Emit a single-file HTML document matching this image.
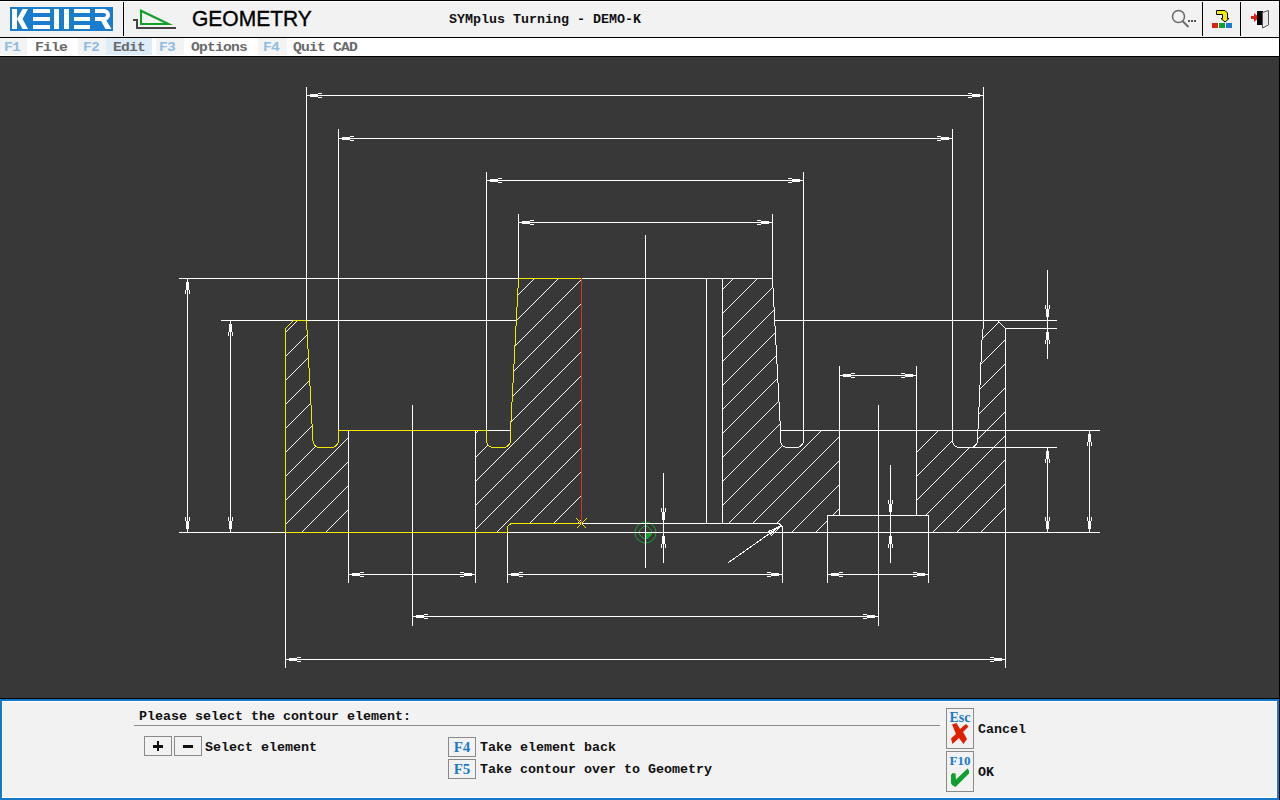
<!DOCTYPE html>
<html><head><meta charset="utf-8">
<style>
*{margin:0;padding:0;box-sizing:border-box}
html,body{width:1280px;height:800px;overflow:hidden;background:#383838;position:relative;font-family:"Liberation Sans",sans-serif}
.abs{position:absolute}
.mono{font-family:"Liberation Mono",monospace}
#hdr{position:absolute;left:0;top:0;width:1280px;height:37px;background:#f2f2f2;border-top:1px solid #000}
#hdr:before{content:"";position:absolute;left:0;top:0;width:1280px;height:1px;background:#fff}
.blk{position:absolute;background:#000}
#menu{position:absolute;left:0;top:38px;width:1280px;height:18px;background:#fff}
.key{position:absolute;top:0;height:17px;background:#f3f3f3}
.mt{position:absolute;top:2px;font-family:"Liberation Mono",monospace;font-weight:bold;font-size:13.33px;line-height:16px;color:#6a6a6a;white-space:pre;transform:scaleX(1.1);transform-origin:0 0;letter-spacing:-0.73px}
.mk{color:#8dbde6}
#panel{position:absolute;left:0;top:699px;width:1279px;height:101px;background:#f2f2f2;border:2px solid #1678c8}
#panel:before{content:"";position:absolute;left:0;top:0;right:0;bottom:0;border-left:1px solid #fff;border-top:1px solid #fff;border-right:1px solid #fff;border-bottom:1px solid #fff}
.pt{position:absolute;font-family:"Liberation Mono",monospace;font-weight:bold;font-size:13.33px;line-height:16px;color:#111;white-space:pre}
.box{position:absolute;border:1px solid #8a8a8a;background:#f2f2f2}
.kb{font-family:"Liberation Serif",serif;font-weight:bold;color:#1a7ac8}
</style></head><body>
<svg width="1280" height="800" style="position:absolute;left:0;top:0" shape-rendering="crispEdges">
<circle cx="645.5" cy="532.5" r="10.5" fill="none" stroke="#18a030" shape-rendering="auto"/>
<path d="M643.5,526.5 L647.5,526.5 L651.5,530.5 L651.5,534.5 L647.5,538.5 L643.5,538.5 L639.5,534.5 L639.5,530.5 Z" fill="none" stroke="#18a030"/>
<path d="M646,533 L652,533 L652,534 L647,539 L646,539 Z" fill="#18a030"/>
<g shape-rendering="crispEdges"><rect x="306" y="95" width="678" height="1" fill="#ffffff"/>
<rect x="310" y="94" width="8" height="3" fill="#ffffff"/>
<rect x="318" y="93" width="4" height="1" fill="#ffffff"/>
<rect x="318" y="97" width="4" height="1" fill="#ffffff"/>
<rect x="972" y="94" width="8" height="3" fill="#ffffff"/>
<rect x="968" y="93" width="4" height="1" fill="#ffffff"/>
<rect x="968" y="97" width="4" height="1" fill="#ffffff"/>
<rect x="338" y="138" width="615" height="1" fill="#ffffff"/>
<rect x="342" y="137" width="8" height="3" fill="#ffffff"/>
<rect x="350" y="136" width="4" height="1" fill="#ffffff"/>
<rect x="350" y="140" width="4" height="1" fill="#ffffff"/>
<rect x="941" y="137" width="8" height="3" fill="#ffffff"/>
<rect x="937" y="136" width="4" height="1" fill="#ffffff"/>
<rect x="937" y="140" width="4" height="1" fill="#ffffff"/>
<rect x="486" y="180" width="318" height="1" fill="#ffffff"/>
<rect x="490" y="179" width="8" height="3" fill="#ffffff"/>
<rect x="498" y="178" width="4" height="1" fill="#ffffff"/>
<rect x="498" y="182" width="4" height="1" fill="#ffffff"/>
<rect x="792" y="179" width="8" height="3" fill="#ffffff"/>
<rect x="788" y="178" width="4" height="1" fill="#ffffff"/>
<rect x="788" y="182" width="4" height="1" fill="#ffffff"/>
<rect x="518" y="222" width="255" height="1" fill="#ffffff"/>
<rect x="522" y="221" width="8" height="3" fill="#ffffff"/>
<rect x="530" y="220" width="4" height="1" fill="#ffffff"/>
<rect x="530" y="224" width="4" height="1" fill="#ffffff"/>
<rect x="761" y="221" width="8" height="3" fill="#ffffff"/>
<rect x="757" y="220" width="4" height="1" fill="#ffffff"/>
<rect x="757" y="224" width="4" height="1" fill="#ffffff"/>
<rect x="839" y="375" width="78" height="1" fill="#ffffff"/>
<rect x="843" y="374" width="8" height="3" fill="#ffffff"/>
<rect x="851" y="373" width="4" height="1" fill="#ffffff"/>
<rect x="851" y="377" width="4" height="1" fill="#ffffff"/>
<rect x="905" y="374" width="8" height="3" fill="#ffffff"/>
<rect x="901" y="373" width="4" height="1" fill="#ffffff"/>
<rect x="901" y="377" width="4" height="1" fill="#ffffff"/>
<rect x="348" y="574" width="128" height="1" fill="#ffffff"/>
<rect x="352" y="573" width="8" height="3" fill="#ffffff"/>
<rect x="360" y="572" width="4" height="1" fill="#ffffff"/>
<rect x="360" y="576" width="4" height="1" fill="#ffffff"/>
<rect x="464" y="573" width="8" height="3" fill="#ffffff"/>
<rect x="460" y="572" width="4" height="1" fill="#ffffff"/>
<rect x="460" y="576" width="4" height="1" fill="#ffffff"/>
<rect x="507" y="574" width="276" height="1" fill="#ffffff"/>
<rect x="511" y="573" width="8" height="3" fill="#ffffff"/>
<rect x="519" y="572" width="4" height="1" fill="#ffffff"/>
<rect x="519" y="576" width="4" height="1" fill="#ffffff"/>
<rect x="771" y="573" width="8" height="3" fill="#ffffff"/>
<rect x="767" y="572" width="4" height="1" fill="#ffffff"/>
<rect x="767" y="576" width="4" height="1" fill="#ffffff"/>
<rect x="827" y="574" width="102" height="1" fill="#ffffff"/>
<rect x="831" y="573" width="8" height="3" fill="#ffffff"/>
<rect x="839" y="572" width="4" height="1" fill="#ffffff"/>
<rect x="839" y="576" width="4" height="1" fill="#ffffff"/>
<rect x="917" y="573" width="8" height="3" fill="#ffffff"/>
<rect x="913" y="572" width="4" height="1" fill="#ffffff"/>
<rect x="913" y="576" width="4" height="1" fill="#ffffff"/>
<rect x="412" y="616" width="467" height="1" fill="#ffffff"/>
<rect x="416" y="615" width="8" height="3" fill="#ffffff"/>
<rect x="424" y="614" width="4" height="1" fill="#ffffff"/>
<rect x="424" y="618" width="4" height="1" fill="#ffffff"/>
<rect x="867" y="615" width="8" height="3" fill="#ffffff"/>
<rect x="863" y="614" width="4" height="1" fill="#ffffff"/>
<rect x="863" y="618" width="4" height="1" fill="#ffffff"/>
<rect x="285" y="659" width="721" height="1" fill="#ffffff"/>
<rect x="289" y="658" width="8" height="3" fill="#ffffff"/>
<rect x="297" y="657" width="4" height="1" fill="#ffffff"/>
<rect x="297" y="661" width="4" height="1" fill="#ffffff"/>
<rect x="994" y="658" width="8" height="3" fill="#ffffff"/>
<rect x="990" y="657" width="4" height="1" fill="#ffffff"/>
<rect x="990" y="661" width="4" height="1" fill="#ffffff"/>
<rect x="187" y="278" width="1" height="255" fill="#ffffff"/>
<rect x="186" y="282" width="3" height="8" fill="#ffffff"/>
<rect x="185" y="290" width="1" height="4" fill="#ffffff"/>
<rect x="189" y="290" width="1" height="4" fill="#ffffff"/>
<rect x="186" y="521" width="3" height="8" fill="#ffffff"/>
<rect x="185" y="517" width="1" height="4" fill="#ffffff"/>
<rect x="189" y="517" width="1" height="4" fill="#ffffff"/>
<rect x="230" y="320" width="1" height="213" fill="#ffffff"/>
<rect x="229" y="324" width="3" height="8" fill="#ffffff"/>
<rect x="228" y="332" width="1" height="4" fill="#ffffff"/>
<rect x="232" y="332" width="1" height="4" fill="#ffffff"/>
<rect x="229" y="521" width="3" height="8" fill="#ffffff"/>
<rect x="228" y="517" width="1" height="4" fill="#ffffff"/>
<rect x="232" y="517" width="1" height="4" fill="#ffffff"/>
<rect x="1089" y="430" width="1" height="103" fill="#ffffff"/>
<rect x="1088" y="434" width="3" height="8" fill="#ffffff"/>
<rect x="1087" y="442" width="1" height="4" fill="#ffffff"/>
<rect x="1091" y="442" width="1" height="4" fill="#ffffff"/>
<rect x="1088" y="521" width="3" height="8" fill="#ffffff"/>
<rect x="1087" y="517" width="1" height="4" fill="#ffffff"/>
<rect x="1091" y="517" width="1" height="4" fill="#ffffff"/>
<rect x="1047" y="447" width="1" height="86" fill="#ffffff"/>
<rect x="1046" y="451" width="3" height="8" fill="#ffffff"/>
<rect x="1045" y="459" width="1" height="4" fill="#ffffff"/>
<rect x="1049" y="459" width="1" height="4" fill="#ffffff"/>
<rect x="1046" y="521" width="3" height="8" fill="#ffffff"/>
<rect x="1045" y="517" width="1" height="4" fill="#ffffff"/>
<rect x="1049" y="517" width="1" height="4" fill="#ffffff"/>
<rect x="1047" y="270" width="1" height="89" fill="#ffffff"/>
<rect x="1046" y="309" width="3" height="8" fill="#ffffff"/>
<rect x="1045" y="305" width="1" height="4" fill="#ffffff"/>
<rect x="1049" y="305" width="1" height="4" fill="#ffffff"/>
<rect x="1046" y="332" width="3" height="8" fill="#ffffff"/>
<rect x="1045" y="340" width="1" height="4" fill="#ffffff"/>
<rect x="1049" y="340" width="1" height="4" fill="#ffffff"/>
<rect x="663" y="473" width="1" height="90" fill="#ffffff"/>
<rect x="662" y="512" width="3" height="8" fill="#ffffff"/>
<rect x="661" y="508" width="1" height="4" fill="#ffffff"/>
<rect x="665" y="508" width="1" height="4" fill="#ffffff"/>
<rect x="662" y="536" width="3" height="8" fill="#ffffff"/>
<rect x="661" y="544" width="1" height="4" fill="#ffffff"/>
<rect x="665" y="544" width="1" height="4" fill="#ffffff"/>
<rect x="890" y="465" width="1" height="98" fill="#ffffff"/>
<rect x="889" y="504" width="3" height="8" fill="#ffffff"/>
<rect x="888" y="500" width="1" height="4" fill="#ffffff"/>
<rect x="892" y="500" width="1" height="4" fill="#ffffff"/>
<rect x="889" y="536" width="3" height="8" fill="#ffffff"/>
<rect x="888" y="544" width="1" height="4" fill="#ffffff"/>
<rect x="892" y="544" width="1" height="4" fill="#ffffff"/>
<rect x="306" y="87" width="1" height="234" fill="#ffffff"/>
<rect x="338" y="129" width="1" height="302" fill="#ffffff"/>
<rect x="486" y="172" width="1" height="259" fill="#ffffff"/>
<rect x="518" y="214" width="1" height="65" fill="#ffffff"/>
<rect x="772" y="214" width="1" height="65" fill="#ffffff"/>
<rect x="803" y="172" width="1" height="269" fill="#ffffff"/>
<rect x="952" y="129" width="1" height="312" fill="#ffffff"/>
<rect x="983" y="87" width="1" height="242" fill="#ffffff"/>
<rect x="179" y="278" width="339" height="1" fill="#ffffff"/>
<rect x="582" y="278" width="191" height="1" fill="#ffffff"/>
<rect x="221" y="320" width="72" height="1" fill="#ffffff"/>
<rect x="307" y="320" width="210" height="1" fill="#ffffff"/>
<rect x="775" y="320" width="282" height="1" fill="#ffffff"/>
<rect x="1005" y="328" width="52" height="1" fill="#ffffff"/>
<rect x="486" y="430" width="25" height="1" fill="#ffffff"/>
<rect x="780" y="430" width="320" height="1" fill="#ffffff"/>
<rect x="959" y="447" width="98" height="1" fill="#ffffff"/>
<rect x="827" y="515" width="102" height="1" fill="#ffffff"/>
<rect x="582" y="523" width="196" height="1" fill="#ffffff"/>
<rect x="179" y="532" width="106" height="1" fill="#ffffff"/>
<rect x="507" y="532" width="593" height="1" fill="#ffffff"/>
<rect x="285" y="532" width="1" height="136" fill="#ffffff"/>
<rect x="348" y="430" width="1" height="153" fill="#ffffff"/>
<rect x="412" y="405" width="1" height="221" fill="#ffffff"/>
<rect x="475" y="430" width="1" height="153" fill="#ffffff"/>
<rect x="507" y="532" width="1" height="51" fill="#ffffff"/>
<rect x="645" y="235" width="1" height="333" fill="#ffffff"/>
<rect x="706" y="278" width="1" height="246" fill="#ffffff"/>
<rect x="722" y="278" width="1" height="246" fill="#ffffff"/>
<rect x="782" y="532" width="1" height="51" fill="#ffffff"/>
<rect x="827" y="515" width="1" height="68" fill="#ffffff"/>
<rect x="839" y="366" width="1" height="150" fill="#ffffff"/>
<rect x="878" y="405" width="1" height="221" fill="#ffffff"/>
<rect x="916" y="366" width="1" height="150" fill="#ffffff"/>
<rect x="928" y="515" width="1" height="68" fill="#ffffff"/>
<rect x="1005" y="328" width="1" height="340" fill="#ffffff"/></g>
<pattern id="p1" patternUnits="userSpaceOnUse" x="0" y="0" width="24" height="24"><path d="M17,0h1v1h-1zM16,1h1v1h-1zM15,2h1v1h-1zM14,3h1v1h-1zM13,4h1v1h-1zM12,5h1v1h-1zM11,6h1v1h-1zM10,7h1v1h-1zM9,8h1v1h-1zM8,9h1v1h-1zM7,10h1v1h-1zM6,11h1v1h-1zM5,12h1v1h-1zM4,13h1v1h-1zM3,14h1v1h-1zM2,15h1v1h-1zM1,16h1v1h-1zM0,17h1v1h-1zM23,18h1v1h-1zM22,19h1v1h-1zM21,20h1v1h-1zM20,21h1v1h-1zM19,22h1v1h-1zM18,23h1v1h-1z" fill="#ffffff"/></pattern><path d="M285.5,532.5 L285.5,328.5 L293.5,320.5 L306.5,320.5 L312.9,440.5 A7,7 0 0 0 319.9,447.5 L331.5,447.5 A7,7 0 0 0 338.5,440.5 L338.5,430.5 L348.5,430.5 L348.5,532.5 Z" fill="url(#p1)"/><pattern id="p2" patternUnits="userSpaceOnUse" x="0" y="0" width="24" height="24"><path d="M20,0h1v1h-1zM19,1h1v1h-1zM18,2h1v1h-1zM17,3h1v1h-1zM16,4h1v1h-1zM15,5h1v1h-1zM14,6h1v1h-1zM13,7h1v1h-1zM12,8h1v1h-1zM11,9h1v1h-1zM10,10h1v1h-1zM9,11h1v1h-1zM8,12h1v1h-1zM7,13h1v1h-1zM6,14h1v1h-1zM5,15h1v1h-1zM4,16h1v1h-1zM3,17h1v1h-1zM2,18h1v1h-1zM1,19h1v1h-1zM0,20h1v1h-1zM23,21h1v1h-1zM22,22h1v1h-1zM21,23h1v1h-1z" fill="#ffffff"/></pattern><path d="M475.5,532.5 L475.5,430.5 L486.5,430.5 L486.5,440.5 A7,7 0 0 0 493.5,447.5 L503.5,447.5 A7,7 0 0 0 510.5,440.5 L510.5,430.5 L518.5,278.5 L581.5,278.5 L581.5,523.5 L512.5,523.5 A5,5 0 0 0 507.5,528.5 L507.5,532.5 Z" fill="url(#p2)"/><pattern id="p3" patternUnits="userSpaceOnUse" x="0" y="0" width="24" height="24"><path d="M3,0h1v1h-1zM2,1h1v1h-1zM1,2h1v1h-1zM0,3h1v1h-1zM23,4h1v1h-1zM22,5h1v1h-1zM21,6h1v1h-1zM20,7h1v1h-1zM19,8h1v1h-1zM18,9h1v1h-1zM17,10h1v1h-1zM16,11h1v1h-1zM15,12h1v1h-1zM14,13h1v1h-1zM13,14h1v1h-1zM12,15h1v1h-1zM11,16h1v1h-1zM10,17h1v1h-1zM9,18h1v1h-1zM8,19h1v1h-1zM7,20h1v1h-1zM6,21h1v1h-1zM5,22h1v1h-1zM4,23h1v1h-1z" fill="#ffffff"/></pattern><path d="M722.5,523.5 L722.5,278.5 L772.5,278.5 L780.5,430.5 L780.5,440.5 A7,7 0 0 0 787.5,447.5 L796.5,447.5 A7,7 0 0 0 803.5,440.5 L803.5,430.5 L839.5,430.5 L839.5,515.5 L827.5,515.5 L827.5,532.5 L782.5,532.5 L782.5,528.5 A5,5 0 0 0 777.5,523.5 Z" fill="url(#p3)"/><pattern id="p4" patternUnits="userSpaceOnUse" x="0" y="0" width="24" height="24"><path d="M0,0h1v1h-1zM23,1h1v1h-1zM22,2h1v1h-1zM21,3h1v1h-1zM20,4h1v1h-1zM19,5h1v1h-1zM18,6h1v1h-1zM17,7h1v1h-1zM16,8h1v1h-1zM15,9h1v1h-1zM14,10h1v1h-1zM13,11h1v1h-1zM12,12h1v1h-1zM11,13h1v1h-1zM10,14h1v1h-1zM9,15h1v1h-1zM8,16h1v1h-1zM7,17h1v1h-1zM6,18h1v1h-1zM5,19h1v1h-1zM4,20h1v1h-1zM3,21h1v1h-1zM2,22h1v1h-1zM1,23h1v1h-1z" fill="#ffffff"/></pattern><path d="M916.5,515.5 L916.5,430.5 L952.5,430.5 L952.5,440.5 A7,7 0 0 0 959.5,447.5 L970.5,447.5 A7,7 0 0 0 977.5,440.5 L977.5,430.5 L982.5,329.5 L983.5,320.5 L997.5,320.5 L1005.5,328.5 L1005.5,532.5 L928.5,532.5 L928.5,515.5 Z" fill="url(#p4)"/>

<path d="M772.5,278.5 L780.5,430.5 L780.5,440.5 A7,7 0 0 0 787.5,447.5 L796.5,447.5 A7,7 0 0 0 803.5,440.5" fill="none" stroke="#ffffff"/>
<path d="M952.5,440.5 A7,7 0 0 0 959.5,447.5 L970.5,447.5 A7,7 0 0 0 977.5,440.5 L982.5,329.5" fill="none" stroke="#ffffff"/>
<path d="M997.5,320.5 L1005.5,328.5" fill="none" stroke="#ffffff"/>
<path d="M777.5,523.5 A5,5 0 0 1 782.5,528.5 L782.5,532.5" fill="none" stroke="#ffffff"/>


<path d="M507.5,532.5 L285.5,532.5 L285.5,328.5 L293.5,320.5 L306.5,320.5 L312.9,440.5 A7,7 0 0 0 319.9,447.5 L331.5,447.5 A7,7 0 0 0 338.5,440.5 L338.5,430.5 L486.5,430.5 L486.5,440.5 A7,7 0 0 0 493.5,447.5 L503.5,447.5 A7,7 0 0 0 510.5,440.5 L510.5,430.5 L518.5,278.5 L581.5,278.5" fill="none" stroke="#f0e800"/>
<path d="M581.5,523.5 L512.5,523.5 A5,5 0 0 0 507.5,528.5 L507.5,532.5" fill="none" stroke="#f0e800"/>
<path d="M576.5,518.5 L586.5,528.5 M586.5,518.5 L576.5,528.5" stroke="#f0e800"/>

<rect x="581" y="278" width="1" height="246" fill="#dc3218"/>
<path d="M728.5,562.5 L781,525.5" stroke="#ffffff"/>
<path d="M781.5,525.5 L768.5,531.5 L771.5,535.5 Z" fill="none" stroke="#ffffff"/><path d="M779,527 L770,532 L771,534 Z" fill="#ffffff"/>
</svg>
<div id="hdr">
  <svg class="abs" style="left:0;top:-1px" width="1280" height="37">
    <rect x="10" y="7" width="103" height="24" fill="#1a7ccc"/>
    <g fill="#fff">
      <rect x="12" y="9" width="5" height="20"/>
      <path d="M17,19 L22.5,9 L28,9 L22.5,19 L28,29 L22.5,29 Z"/>
      <rect x="33" y="9" width="17" height="4"/><rect x="33" y="17" width="17" height="4"/><rect x="33" y="25" width="17" height="4"/>
      <rect x="54" y="9" width="5" height="20"/><rect x="64" y="9" width="5" height="20"/>
      <rect x="74" y="9" width="16" height="4"/><rect x="74" y="17" width="16" height="4"/><rect x="74" y="25" width="16" height="4"/>
      <path d="M95,9 L104,9 A6,6 0 0 1 104,21 L95,21 L95,17 L104,17 A2,2 0 0 0 104,13 L95,13 Z"/>
      <path d="M100.5,20 L106,20 L111.5,29 L105.5,29 Z"/>
    </g>
    <rect x="123" y="2" width="1" height="34" fill="#000"/>
    <path d="M133,20 L137,20 L137,28 L176,28" fill="none" stroke="#444" stroke-width="2"/>
    <path d="M140,9 L140,25 L173,25 Z M142,12.5 L142,23 L164,23 Z" fill="#10a028" fill-rule="evenodd"/>
    <rect x="1202" y="2" width="1" height="34" fill="#000"/>
    <rect x="1240" y="2" width="1" height="34" fill="#000"/>
    <circle cx="1178.5" cy="16.5" r="6" fill="none" stroke="#6a6a6a" stroke-width="1.5"/>
    <path d="M1182.5,21 L1188.5,27" stroke="#6a6a6a" stroke-width="2"/>
    <rect x="1188" y="20" width="2" height="2" fill="#555"/><rect x="1191" y="20" width="2" height="2" fill="#555"/><rect x="1194" y="20" width="2" height="2" fill="#555"/>
    <rect x="1212" y="23" width="6" height="5" fill="#e02010"/>
    <rect x="1219" y="23" width="6" height="5" fill="#10a030"/>
    <rect x="1226" y="23" width="6" height="5" fill="#1a7ccc"/>
    <path d="M1216.5,10.5 L1225,10.5 L1227.5,13 L1227.5,18.5 L1229,18.5 L1225,22 L1221,18.5 L1222.5,18.5 L1222.5,14.5 L1216.5,14.5 Z" fill="#f0f000" stroke="#000" stroke-width="1"/>
    <path d="M1251,16 L1254,16 L1254,13 L1259,17.5 L1254,22 L1254,19 L1251,19 Z" fill="#e02010"/>
    <rect x="1257" y="11" width="6" height="14" fill="#000"/>
    <path d="M1262.5,12.5 L1268.5,10.5 L1268.5,25 L1262.5,28 Z" fill="#e8e8e8" stroke="#555" stroke-width="1"/>
  </svg>
  <div class="abs" style="left:192px;top:6px;font-size:21px;line-height:24px;color:#000;-webkit-text-stroke:0.35px #000;transform:scaleY(1.07);transform-origin:0 19px">GEOMETRY</div>
  <div class="abs mono" style="left:449px;top:11px;font-size:13.33px;line-height:16px;font-weight:bold;color:#111">SYMplus Turning - DEMO-K</div>
</div>
<div class="blk" style="left:0;top:37px;width:1280px;height:1px"></div>
<div id="menu">
  <div class="key" style="left:0;width:27px"></div>
  <div class="key" style="left:78px;width:28px"></div>
  <div class="key" style="left:106px;width:46px;background:#dcecf9"></div>
  <div class="key" style="left:156px;width:28px"></div>
  <div class="key" style="left:258px;width:29px"></div>
  <div class="mt mk" style="left:4px">F1</div>
  <div class="mt" style="left:35px">File</div>
  <div class="mt mk" style="left:83px">F2</div>
  <div class="mt" style="left:113px">Edit</div>
  <div class="mt mk" style="left:159px">F3</div>
  <div class="mt" style="left:191px">Options</div>
  <div class="mt mk" style="left:263px">F4</div>
  <div class="mt" style="left:293px">Quit CAD</div>
</div>
<div class="blk" style="left:0;top:56px;width:1280px;height:1px"></div>
<div class="blk" style="left:0;top:698px;width:1280px;height:1px"></div>
<div class="blk" style="left:1279px;top:0;width:1px;height:800px"></div>
<div id="panel">
  <div class="pt" style="left:137px;top:8px">Please select the contour element:</div>
  <div class="abs" style="left:132px;top:24px;width:806px;height:1px;background:#8c8c8c"></div>
  <div class="box" style="left:142px;top:35px;width:28px;height:20px"></div>
  <div class="box" style="left:172px;top:35px;width:28px;height:20px"></div>
  <div class="abs" style="left:151px;top:44px;width:10px;height:3px;background:#111"></div>
  <div class="abs" style="left:155px;top:40px;width:2px;height:10px;background:#111"></div>
  <div class="abs" style="left:181px;top:44px;width:10px;height:3px;background:#111"></div>
  <div class="pt" style="left:203px;top:39px">Select element</div>
  <div class="box" style="left:446px;top:36px;width:28px;height:20px"></div>
  <div class="abs kb" style="left:446px;top:37px;width:28px;text-align:center;font-size:15px;line-height:18px">F4</div>
  <div class="pt" style="left:478px;top:39px">Take element back</div>
  <div class="box" style="left:446px;top:58px;width:28px;height:20px"></div>
  <div class="abs kb" style="left:446px;top:59px;width:28px;text-align:center;font-size:15px;line-height:18px">F5</div>
  <div class="pt" style="left:478px;top:61px">Take contour over to Geometry</div>
  <div class="box" style="left:944px;top:7px;width:28px;height:41px"></div>
  <div class="abs kb" style="left:944px;top:9px;width:28px;text-align:center;font-size:14px;line-height:16px">Esc</div>
  <svg class="abs" style="left:944px;top:7px" width="28" height="41">
    <path d="M6,16.5 L10.5,15 L14,21 L20,16 L22.5,18.5 L17,24 L21,31 L17.5,36 L13,30 L6.5,36 L5,30.5 L10,26 Z" fill="#e02000"/>
  </svg>
  <div class="pt" style="left:976px;top:21px">Cancel</div>
  <div class="box" style="left:944px;top:50px;width:28px;height:41px"></div>
  <div class="abs kb" style="left:944px;top:52px;width:28px;text-align:center;font-size:13px;line-height:15px">F10</div>
  <svg class="abs" style="left:944px;top:50px" width="28" height="41">
    <path d="M5,24 L6.5,22 L9.5,22.5 L10,28.5 L21.5,17.5 L23,19.5 L23,22.5 L9.5,36 L6,34 L5,32 Z" fill="#10a030"/>
  </svg>
  <div class="pt" style="left:976px;top:64px">OK</div>
</div>
</body></html>
